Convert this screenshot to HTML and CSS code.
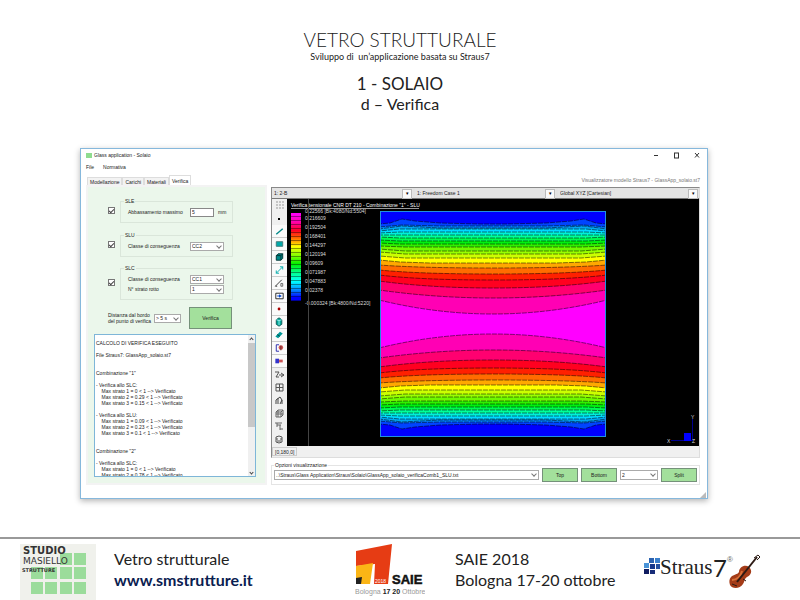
FILE: index.html
```
<!DOCTYPE html>
<html lang="it">
<head>
  <meta charset="UTF-8">
  <meta name="viewport" content="width=device-width, initial-scale=1.0">
  <title>Vetro strutturale - Solaio</title>
  <link rel="stylesheet" href="styles.css">
</head>
<body>
  <header class="slide-head">
    <h1>VETRO STRUTTURALE</h1>
    <p class="subtitle">Sviluppo di &nbsp;un’applicazione basata su Straus7</p>
    <h2>1 - SOLAIO</h2>
    <h3>d – Verifica</h3>
  </header>

  <main class="window">
    <div class="titlebar">
      <span class="app-icon"></span>
      <span>Glass application - Solaio</span>
      <svg class="win-btns" width="50" height="10" viewBox="0 0 50 10" fill="none" stroke="#333">
        <path d="M4 5.500h4"/><rect x="24.500" y="3" width="4" height="5"/><path d="M45 3l4 4.500M49 3l-4 4.500"/>
      </svg>
    </div>
    <nav class="menu"><a href="#">File</a><a href="#">Normativa</a></nav>

    <div class="content">
      <section class="left">
        <div class="tabs">
          <button>Modellazione</button><button>Carichi</button><button>Materiali</button><button class="active">Verifica</button>
        </div>
        <div class="panel">
          <div class="check-row">
            <input type="checkbox" aria-label="SLE" checked>
            <fieldset>
              <legend>SLE</legend>
              <div class="field"><label for="abb">Abbassamento massimo</label><input id="abb" type="text" value="5"><span class="unit">mm</span></div>
            </fieldset>
          </div>
          <div class="check-row">
            <input type="checkbox" aria-label="SLU" checked>
            <fieldset>
              <legend>SLU</legend>
              <div class="field"><label for="slu">Classe di conseguenza</label><span class="drop"><select id="slu"><option>CC2</option></select></span></div>
            </fieldset>
          </div>
          <div class="check-row tall">
            <input type="checkbox" aria-label="SLC" checked>
            <fieldset>
              <legend>SLC</legend>
              <div class="field"><label for="slc">Classe di conseguenza</label><span class="drop"><select id="slc"><option>CC1</option></select></span></div>
              <div class="field"><label for="strato">N° strato rotto</label><span class="drop"><select id="strato"><option>1</option></select></span></div>
            </fieldset>
          </div>
          <div class="run-row">
            <label for="dist">Distanza dal bordo<br>del punto di verifica</label>
            <span class="drop"><select id="dist"><option>&gt; 5 s</option></select></span>
            <button class="green">Verifica</button>
          </div>
          <div class="log">
            <textarea aria-label="Risultati" spellcheck="false">CALCOLO DI VERIFICA ESEGUITO

File Straus7: GlassApp_solaio.st7


Combinazione "1"

- Verifica allo SLC:
    Max strato 1 = 0 &lt; 1 --&gt; Verificato
    Max strato 2 = 0.29 &lt; 1 --&gt; Verificato
    Max strato 3 = 0.15 &lt; 1 --&gt; Verificato

- Verifica allo SLU:
    Max strato 1 = 0.09 &lt; 1 --&gt; Verificato
    Max strato 2 = 0.23 &lt; 1 --&gt; Verificato
    Max strato 3 = 0.1 &lt; 1 --&gt; Verificato


Combinazione "2"

- Verifica allo SLC:
    Max strato 1 = 0 &lt; 1 --&gt; Verificato
    Max strato 2 = 0.78 &lt; 1 --&gt; Verificato</textarea>
            <div class="scroll"><i class="up"></i><b></b><i class="down"></i></div>
          </div>
        </div>
      </section>

      <section class="right">
        <p class="model-name">Visualizzatore modello Straus7 - GlassApp_solaio.st7</p>
        <div class="viewer">
          <div class="cases">
            <span class="case"><select aria-label="Vista"><option>1: 2-B</option></select></span>
            <span class="case"><select aria-label="Caso"><option>1: Freedom Case 1</option></select></span>
            <span class="case"><select aria-label="Assi"><option>Global XYZ [Cartesian]</option></select></span>
          </div>
          <div class="stage">
            <div class="tools">
              <svg viewBox="0 0 15 13"><path d="M4 3h2M7 3h2M10 3h2M4 6h2M7 6h2M10 6h2M4 9h2M7 9h2M10 9h2" stroke="#999"/></svg>
              <svg viewBox="0 0 15 13"><path d="M6 6h2v2H6z"/></svg>
              <svg class="key" viewBox="0 0 15 13"><path d="M4 10l7-6" stroke="#008888" stroke-width="1.500"/></svg>
              <svg class="key" viewBox="0 0 15 13"><path d="M4 4h7v5H4z" fill="#0aa" stroke="#477"/></svg>
              <svg class="key" viewBox="0 0 15 13"><path d="M4 5l2-2h5v5l-2 2H4z" fill="#088" stroke="#033"/><path d="M4 5h5v5M9 5l2-2" fill="none" stroke="#033"/></svg>
              <svg class="key" viewBox="0 0 15 13"><path d="M4 10l7-7M4 7v3h3M8 3h3v3" fill="none" stroke="#0aa"/></svg>
              <svg class="key" viewBox="0 0 15 13"><path d="M3 10l7-7M3 10h2" fill="none" stroke="#333"/><path d="M9 7h2v3H9z" fill="none" stroke="#666"/></svg>
              <svg class="key" viewBox="0 0 15 13"><path d="M3.500 3.500h8v6h-8z" fill="#fff" stroke="#222"/><path d="M5 6h2V4.500l3 2-3 2V7H5z" fill="#0044cc"/></svg>
              <svg class="key" viewBox="0 0 15 13"><circle cx="7" cy="6.500" r="1.500" fill="#a00"/></svg>
              <svg class="key" viewBox="0 0 15 13"><path d="M4 4l3-2 3 2v5l-3 2-3-2z" fill="#0a9" stroke="#155"/><path d="M4 4l3 1 3-1M7 5v5" fill="none" stroke="#9ee"/></svg>
              <svg class="key" viewBox="0 0 15 13"><path d="M3 8l5-5 3 2-5 5z" fill="#099"/><path d="M5 6l3 2" stroke="#044"/></svg>
              <svg class="key" viewBox="0 0 15 13"><path d="M4 3v7M4 3h3M4 10h3" fill="none" stroke="#22a"/><circle cx="9" cy="6" r="2.500" fill="#c55"/><path d="M9 4v5" stroke="#622"/></svg>
              <svg class="key" viewBox="0 0 15 13"><path d="M3 4h4v5H3z" fill="#33c"/><path d="M7 5h4v3H7z" fill="#c55"/></svg>
              <svg viewBox="0 0 15 13"><path d="M3 4h4l-3 5h3M7 7h5M9 5l3 2-3 2" fill="none" stroke="#555"/></svg>
              <svg viewBox="0 0 15 13"><path d="M4 3h7v7H4zM7.500 3v7M4 6.500h7" fill="none" stroke="#555"/></svg>
              <svg viewBox="0 0 15 13"><path d="M4 6v4M6 4v6M8 3l2 3-2 4M10 6v4M4 6l4-3" fill="none" stroke="#444"/></svg>
              <svg viewBox="0 0 15 13"><path d="M4 5l2-2h5v5l-2 2H4zM4 5h5v5M9 5l2-2M6 3v7M4 7h7" fill="none" stroke="#666"/></svg>
              <svg viewBox="0 0 15 13"><path d="M3 3h7M5 3v4M5 5h4M8 5v5M8 9h3" fill="none" stroke="#666"/></svg>
              <svg viewBox="0 0 15 13"><path d="M4 4l3-1 3 1v5l-3 1-3-1zM4 6h2M8 6h2M5 8h4" fill="none" stroke="#555"/></svg>
            </div>
            <div class="canvas">
              <span class="guide"></span>
              <div class="key-col">
                <p class="plot-title">Verifica tensionale CNR DT 210 - Combinazione "1" - SLU</p>
                <div class="scale">
                  <div class="ramp"></div>
                  <ul>
                    <li class="end">0.22566 [Bk:4080/Nd:5504]</li>
                    <li>0.216609</li>
                    <li>0.192504</li>
                    <li>0.168401</li>
                    <li>0.144297</li>
                    <li>0.120194</li>
                    <li>0.09609</li>
                    <li>0.071987</li>
                    <li>0.047883</li>
                    <li>0.02378</li>
                    <li class="low">-0.000324 [Bk:4800/Nd:5220]</li>
                  </ul>
                </div>
              </div>
              <svg class="plot" viewBox="0 0 226 226">
                <rect width="226" height="226" fill="#f0f"/>
                <!-- upper half of the contour bands, inner to outer -->
                <g id="bands" stroke="#000" stroke-opacity=".5" stroke-dasharray="5 1">
                  <path fill="#ff00b4" d="M-1-1V89Q113 117 227 89V-1z"/>
                  <path fill="#ff0070" d="M-1-1V79Q113 95 227 79V-1z"/>
                  <path fill="#ff0020" d="M-1-1V70Q50 77 113 77T227 70V-1z"/>
                  <path fill="#ff2000" d="M-1-1V64Q40 69 113 69T227 64V-1z"/>
                  <path fill="#ff6c00" d="M-1-1V59Q40 63 113 63T227 59V-1z"/>
                  <path fill="#ffa800" d="M-1-1V54Q40 57 113 57T227 54V-1z"/>
                  <path fill="#ffff00" d="M-1-1V49L20 51 50 52H176L206 51 227 49V-1z"/>
                  <path fill="#ccff00" d="M-1-1V45L25 47H201L227 45V-1z"/>
                  <path fill="#98ff00" d="M-1-1V41L25 43H201L227 41V-1z"/>
                  <path fill="#70f800" d="M-1-1V38L25 40H201L227 38V-1z"/>
                  <path fill="#30f000" d="M-1-1V35L25 36H201L227 35V-1z"/>
                  <path fill="#00f010" d="M-1-1V32L20 33H206L227 32V-1z"/>
                  <path fill="#00f850" d="M-1-1V29L20 30H206L227 29V-1z"/>
                  <path fill="#00ff98" d="M-1-1V26L20 27H206L227 26V-1z"/>
                  <path fill="#00f0d8" d="M-1-1V24H227V-1z"/>
                  <path fill="#00d8ff" d="M-1-1V22L20 21H206L227 22V-1z"/>
                  <path fill="#00a8f0" d="M-1-1V20L20 18H206L227 20V-1z"/>
                  <path fill="#0080ff" d="M-1-1V18L22 15 60 17H166L204 15 227 18V-1z"/>
                  <path fill="#0044ff" d="M-1-1V16L22 14 60 15H166L204 14 227 16V-1z"/>
                  <path fill="#0000ff" d="M-1-1V13L10 12 22 8 35 10 60 12 100 13H126L166 12 191 10 204 8 216 12 227 13V-1z"/>
                </g>
                <use href="#bands" transform="matrix(1 0 0 -1 0 226)"/>
                <rect x=".5" y=".5" width="225" height="225" fill="none" stroke="#2090e0"/>
              </svg>
              <svg class="axes" width="32" height="32" viewBox="0 0 32 32">
                <path d="M5 27.500h22M26.500 27V6" stroke="#00008c"/>
                <rect x="18" y="20" width="7" height="8" fill="#00f"/>
                <g fill="#ddd" font-size="5"><text x="1" y="30">X</text><text x="25" y="6">Y</text><text x="26" y="30">Z</text></g>
              </svg>
            </div>
          </div>
          <div class="status"><span>[0,180,0]</span></div>
        </div>

        <fieldset class="options">
          <legend>Opzioni visualizzazione</legend>
          <span class="drop path"><select aria-label="File"><option>..\Straus\Glass Application\Straus\Solaio\GlassApp_solaio_verificaComb1_SLU.txt</option></select></span>
          <button class="green">Top</button>
          <button class="green">Bottom</button>
          <span class="drop num"><select aria-label="Strato"><option>2</option></select></span>
          <button class="green">Split</button>
        </fieldset>
      </section>
    </div>
    <div class="grip"></div>
  </main>

  <footer>
    <svg class="studio" width="76" height="56" viewBox="0 0 76 56" role="img" aria-label="Studio Masiello Strutture">
      <rect width="76" height="56" fill="#f0f1ec"/>
      <g fill="#9bdc9b">
        <path d="M54 9h12v12H54zM40 9h12v12H40z"/>
        <path d="M11 23h12v12H11zM25 23h12v12H25zM40 23h12v12H40zM54 23h12v12H54z"/>
        <path d="M11 38h12v12H11zM25 38h12v12H25zM40 38h12v12H40zM54 38h12v12H54z"/>
      </g>
      <g fill="#333" font-family="DejaVu Sans, sans-serif">
        <text x="3" y="10" font-size="10" font-weight="bold">STUDIO</text>
        <text x="3" y="20" font-size="9">MASIELLO</text>
        <text x="2" y="28" font-size="5" font-weight="bold">STRUTTURE</text>
      </g>
    </svg>
    <p class="who">Vetro strutturale<br><a href="#">www.smstrutture.it</a></p>
    <svg class="saie" width="70" height="52" viewBox="0 0 70 52" role="img" aria-label="SAIE Bologna 17 20 Ottobre">
      <path d="M1 7L37 0 33 40H19L20 20 1 22z" fill="#e63c14"/>
      <path d="M1 22l17-3-3 21H6v-6H1z" fill="#fbb516"/>
      <path d="M1 34l6-1-1 7H1z" fill="#222"/>
      <text x="20" y="39" font-size="5" fill="#fff">2018</text>
      <text x="37" y="40" font-size="13" font-weight="bold" fill="#111" stroke="#111" stroke-width=".5">SAIE</text>
      <text x="0" y="50" font-size="7" fill="#999">Bologna <tspan font-weight="bold" fill="#222">17 20</tspan> Ottobre</text>
    </svg>
    <p class="where">SAIE 2018<br>Bologna 17-20 ottobre</p>
    <svg class="straus" width="120" height="38" viewBox="0 0 120 38" role="img" aria-label="Straus7">
      <path d="M6 5h5v5H6z" fill="#2a62b0"/><path d="M12 5h5v5h-5z" fill="#3a80cc"/>
      <path d="M1 10h5v5H1z" fill="#4a94d8"/><path d="M7 11h5v5H7z" fill="#16388c"/><path d="M13 11h4v5h-4z" fill="#2450a0"/>
      <path d="M1 16h5v5H1z" fill="#101c60"/><path d="M7 17h5v4H7z" fill="#182c78"/>
      <text x="17" y="21" font-family="Liberation Serif, serif" font-size="21" fill="#222">Straus</text>
      <text x="70" y="24" font-family="Lato, sans-serif" font-size="24" fill="#222">7</text>
      <text x="84" y="9" font-size="8" fill="#666">®</text>
      <path d="M88 24c3-3 6-2 8-5 0-5 6-8 10-5 4 4 2 8-2 10-3 2-2 4-4 7-3 5-11 5-13 1-1-3-1-6 1-8z" fill="#a43c18"/>
      <path d="M89 27c5 0 9-4 10-9" fill="none" stroke="#d87038" stroke-width="2"/>
      <path d="M94 29L114 4" stroke="#2c1a14" stroke-width="2"/>
      <path d="M111 5l4-3 2 2-3 3M89 31l5 2M100 26l3 2" fill="none" stroke="#2c1a14"/>
    </svg>
  </footer>
</body>
</html>
```
FILE: styles.css
```
* { box-sizing: border-box; margin: 0; padding: 0; }
body { display: flex; flex-direction: column; min-height: 100vh; background: #fff; font-family: "Liberation Sans", sans-serif; color: #222; }
button, input, select, textarea { font: inherit; color: inherit; }
a { color: inherit; text-decoration: none; }

.slide-head { padding-top: 27px; text-align: center; font-family: Lato, sans-serif; }
h1 { font-size: 19px; font-weight: 300; line-height: 25px; }
.subtitle { font-size: 9px; line-height: 10px; }
h2 { margin-top: 12px; font-size: 17px; font-weight: 400; line-height: 20px; }
h3 { font-size: 16px; font-weight: 400; line-height: 20px; }

.window { margin: 34px 92px 0 80px; padding: 0 7px 0 5px; border: 1px solid #86b8dc; background: #fff; box-shadow: 0 2px 6px rgba(0,0,0,0.3); font-size: 5px; line-height: 6px; }
.titlebar { display: flex; align-items: center; height: 12px; }
.app-icon { width: 6px; height: 5px; margin-right: 2px; background: #8fdc8f; }
.win-btns { margin-left: auto; }
.menu { display: flex; gap: 9px; height: 12px; padding-top: 3px; }
.content { display: flex; gap: 4px; }

.left { flex: 0 0 181px; padding-top: 2px; }
.tabs { display: flex; align-items: flex-end; height: 10px; padding-left: 1px; }
.tabs button { height: 8px; padding: 0 2px; border: 1px solid #ddd; border-bottom: 0; background: #f3f3f3; }
.tabs .active { height: 10px; background: #fff; }
.panel { padding: 10px 9px 6px 6px; border: 2px solid #f3f3f3; background: #ebf7eb; }

.check-row { display: flex; align-items: center; gap: 5px; height: 27px; margin: 0 23px 7px 14px; }
.check-row.tall { height: 35px; }
.check-row input[type="checkbox"] { appearance: none; flex: none; width: 7px; height: 7px; border: 1px solid #777; background: #fff; }
.check-row input:checked::before { content: ""; display: block; width: 4px; height: 2px; margin-top: 1px; border: solid #444; border-width: 0 0 1px 1px; transform: rotate(-45deg); }
fieldset { flex: 1; min-width: 0; border: 1px solid #dae6da; }
.check-row fieldset { padding: 3px 4px 5px 7px; }
legend { margin-left: -4px; padding: 0 1px; }
.check-row .field { display: flex; align-items: center; height: 10px; }
.field label { flex: 0 0 62px; white-space: nowrap; }
.field input { width: 24px; height: 9px; padding-left: 1px; border: 1px solid #888; background: #fff; }
.unit { margin-left: 4px; }

.drop { position: relative; display: block; width: 34px; height: 9px; }
.drop select { appearance: none; display: block; width: 100%; height: 100%; padding-left: 1px; border: 1px solid #aaa; border-radius: 0; background: #fff; }
.drop::after { content: ""; position: absolute; right: 3px; top: 2px; width: 3px; height: 3px; border: solid #777; border-width: 0 1px 1px 0; transform: rotate(45deg); }

.run-row { display: flex; align-items: center; height: 22px; padding-left: 14px; }
.run-row label { flex: 0 0 46px; white-space: nowrap; }
.run-row .drop { width: 27px; }
.run-row .green { width: 43px; height: 22px; margin-left: 8px; }
.green { border: 1px solid #75917a; background: #a3e09c; }

.log { display: flex; height: 143px; margin-top: 5px; border: 1px solid #7eb6d8; background: #fff; }
.log textarea { flex: 1; min-width: 0; padding: 5px 0 0 1px; border: 0; resize: none; overflow: hidden; line-height: 6px; }
.scroll { display: flex; flex-direction: column; align-items: center; width: 7px; background: #f0f0f0; }
.scroll b { width: 7px; height: 84px; background: #c8c8c8; }
.scroll i { width: 3px; height: 3px; margin: 3px 0 2px; border: solid #444; border-width: 1px 0 0 1px; transform: rotate(45deg); }
.scroll .down { margin-top: auto; transform: rotate(225deg); }

.right { flex: 1; min-width: 0; }
.model-name { height: 14px; padding-top: 4px; text-align: right; color: #777; }
.viewer { border: 1px solid #888; border-right-color: #ddd; border-bottom-color: #ddd; background: #f0f0f0; }
.cases { display: grid; grid-template-columns: repeat(3, 1fr); gap: 2px; height: 11px; border-bottom: 1px solid #777; background: #e2e2e2; }
.case { position: relative; }
.case select { appearance: none; display: block; width: 100%; height: 10px; padding-left: 2px; border: 0; background: #e4e4e4; }
.case::after { content: "▾"; position: absolute; right: 1px; top: 1px; width: 8px; height: 8px; border: 1px solid #bbb; background: #fafafa; color: #000; text-align: center; pointer-events: none; }
.stage { display: flex; }
.tools { flex: 0 0 15px; }
.tools svg { display: block; width: 15px; height: 13px; }
.tools .key { border-bottom: 1px solid #ccc; background: #fafafa; }
.canvas { position: relative; flex: 1; min-width: 0; display: flex; background: #000; color: #ddd; }
.guide { position: absolute; left: 21px; top: 0; bottom: 0; border-left: 1px solid #444; }
.key-col { flex: 0 0 93px; min-width: 0; padding: 3px 0 0 4px; }
.plot-title { width: 128px; height: 7px; border-bottom: 1px solid #999; white-space: nowrap; color: #fff; }
.scale { display: flex; gap: 4px; }
.ramp { flex: none; width: 10px; height: 88px; margin-top: 4px; background:
  repeating-linear-gradient(transparent 0 3px, rgba(0,0,0,0.4) 3px 4px),
  linear-gradient(#f0f, #ff00b0 10%, #f02 20%, #ff6000 28%, #ff0 38%, #8f0 48%, #0e0 58%, #00ff90 68%, #0ff 78%, #0080ff 88%, #00f 96%); }
ul { list-style: none; white-space: nowrap; line-height: 9px; }
.end { line-height: 5px; }
.low { padding-top: 4px; }
.plot { flex: none; width: 226px; height: 226px; margin-top: 12px; }
.axes { align-self: flex-end; margin: 0 1px 1px auto; }
.status { height: 11px; padding-top: 1px; }
.status span { display: inline-block; height: 9px; padding: 1px 2px; border: 1px solid #ccc; vertical-align: top; }

.options { display: flex; align-items: center; gap: 3px; margin-top: 4px; padding: 0 2px 2px; border-color: #e4e4e4; }
.options legend { margin-left: 0; }
.options .path { flex: 1; height: 10px; }
.options .num { width: 38px; height: 10px; }
.options .green { width: 36px; height: 14px; }
.grip { width: 6px; height: 6px; margin: 7px -6px 0 auto; background: radial-gradient(#bbb 1px, transparent 1px) 0 0 / 2px 2px; clip-path: polygon(100% 0, 100% 100%, 0 100%); }

footer { display: flex; align-items: flex-start; height: 63px; margin-top: auto; padding: 5px 20px 0; border-top: 2px solid #999; }
footer p { font: 16px/21px Lato, sans-serif; white-space: nowrap; }
footer a { color: #0a2050; font-weight: 700; }
footer svg { flex: none; }
.who { flex: 0 1 259px; padding: 4px 0 0 18px; }
.where { flex: 0 1 218px; padding: 4px 0 0 30px; }
.straus { margin-top: 9px; }
```
